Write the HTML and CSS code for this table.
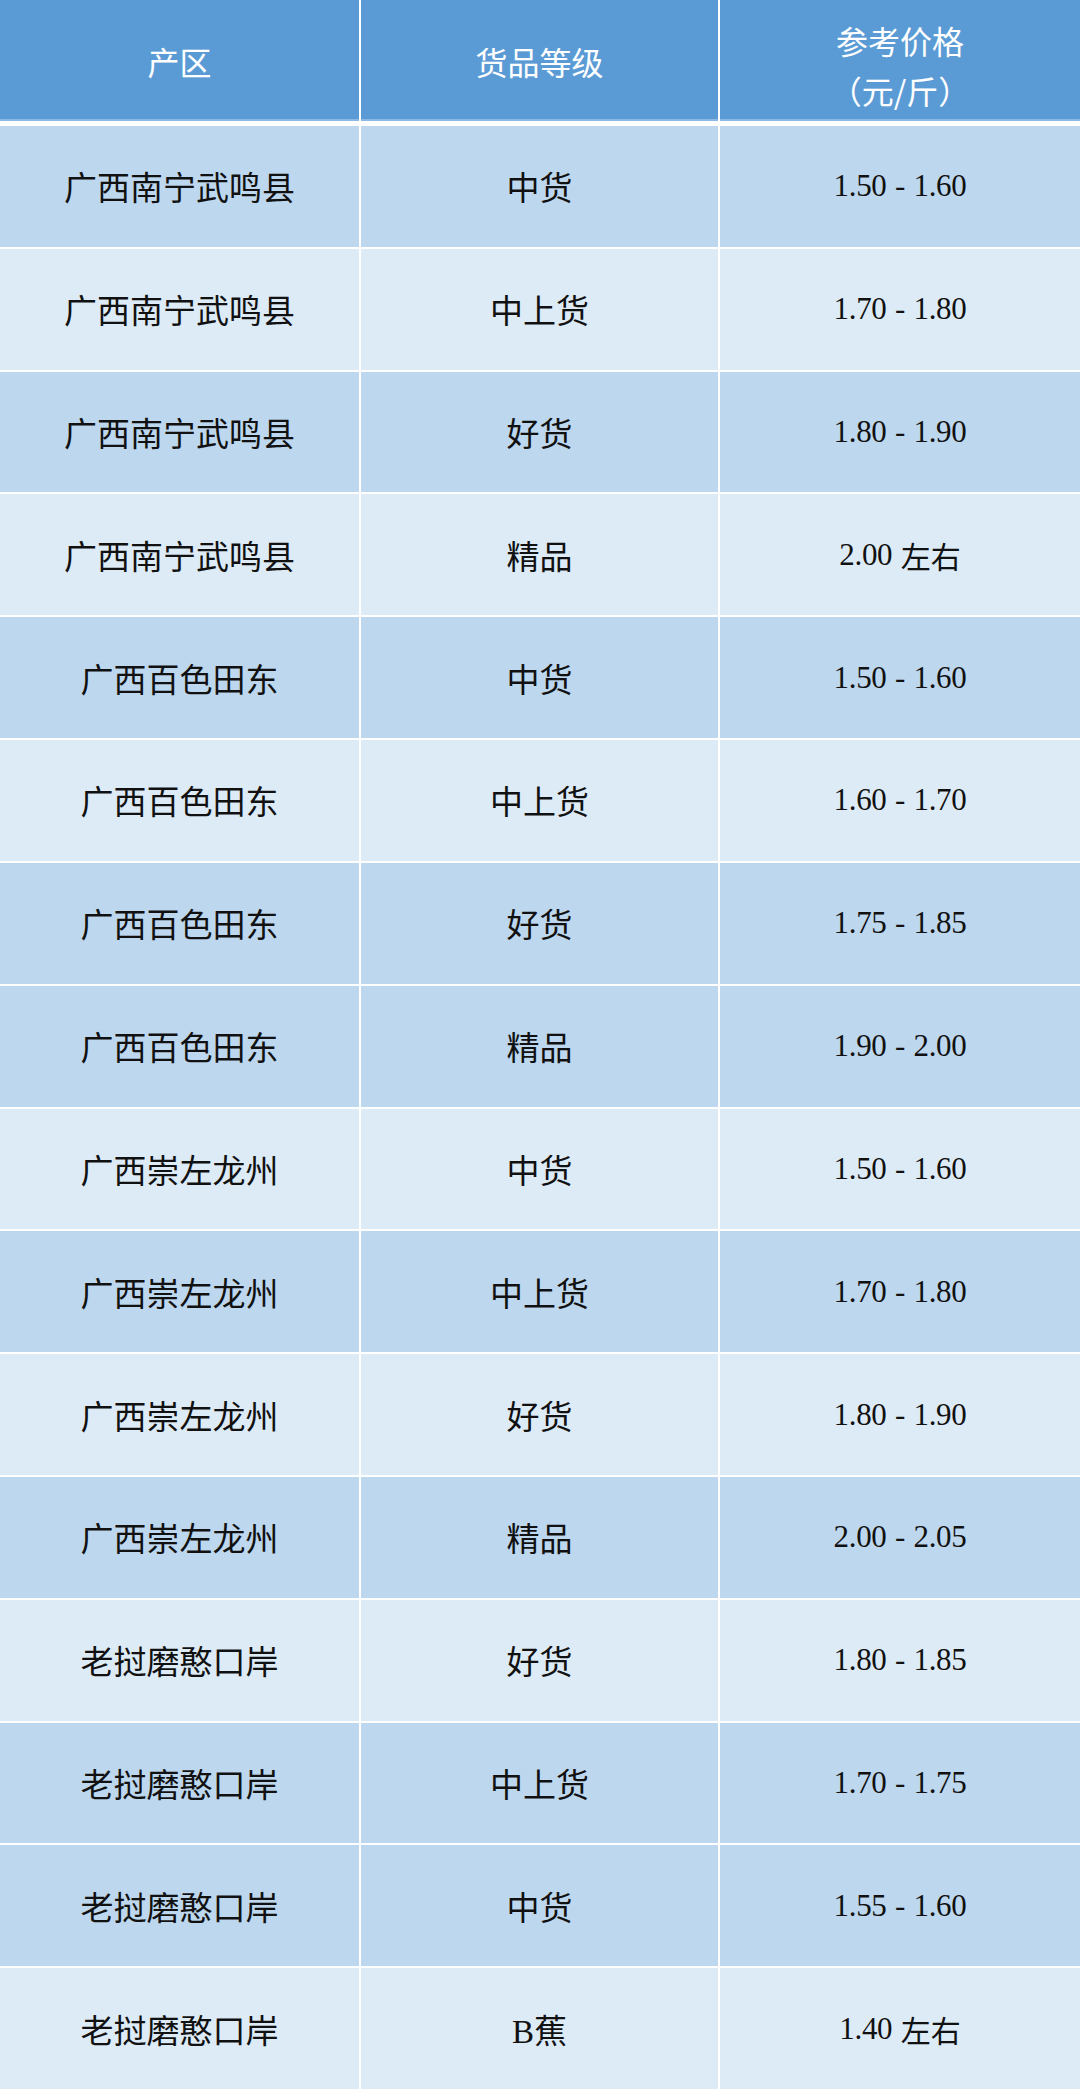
FILE: index.html
```html
<!DOCTYPE html>
<html lang="zh-CN">
<head>
<meta charset="utf-8">
<title>香蕉参考价格</title>
<link rel="stylesheet" href="styles.css">
</head>
<body>
<div class="table">
  <div class="head">
    <div class="hcell">产区</div>
    <div class="hcell">货品等级</div>
    <div class="hcell two">参考价格<br>（元/斤）</div>
  </div>
  <div class="rows">
    <div class="row dark"><div class="cell">广西南宁武鸣县</div><div class="cell">中货</div><div class="cell price">1.50 - 1.60</div></div>
    <div class="row light"><div class="cell">广西南宁武鸣县</div><div class="cell">中上货</div><div class="cell price">1.70 - 1.80</div></div>
    <div class="row dark"><div class="cell">广西南宁武鸣县</div><div class="cell">好货</div><div class="cell price">1.80 - 1.90</div></div>
    <div class="row light"><div class="cell">广西南宁武鸣县</div><div class="cell">精品</div><div class="cell price">2.00 <span class="cjk">左右</span></div></div>
    <div class="row dark"><div class="cell">广西百色田东</div><div class="cell">中货</div><div class="cell price">1.50 - 1.60</div></div>
    <div class="row light"><div class="cell">广西百色田东</div><div class="cell">中上货</div><div class="cell price">1.60 - 1.70</div></div>
    <div class="row dark"><div class="cell">广西百色田东</div><div class="cell">好货</div><div class="cell price">1.75 - 1.85</div></div>
    <div class="row dark"><div class="cell">广西百色田东</div><div class="cell">精品</div><div class="cell price">1.90 - 2.00</div></div>
    <div class="row light"><div class="cell">广西崇左龙州</div><div class="cell">中货</div><div class="cell price">1.50 - 1.60</div></div>
    <div class="row dark"><div class="cell">广西崇左龙州</div><div class="cell">中上货</div><div class="cell price">1.70 - 1.80</div></div>
    <div class="row light"><div class="cell">广西崇左龙州</div><div class="cell">好货</div><div class="cell price">1.80 - 1.90</div></div>
    <div class="row dark"><div class="cell">广西崇左龙州</div><div class="cell">精品</div><div class="cell price">2.00 - 2.05</div></div>
    <div class="row light"><div class="cell">老挝磨憨口岸</div><div class="cell">好货</div><div class="cell price">1.80 - 1.85</div></div>
    <div class="row dark"><div class="cell">老挝磨憨口岸</div><div class="cell">中上货</div><div class="cell price">1.70 - 1.75</div></div>
    <div class="row dark"><div class="cell">老挝磨憨口岸</div><div class="cell">中货</div><div class="cell price">1.55 - 1.60</div></div>
    <div class="row light"><div class="cell">老挝磨憨口岸</div><div class="cell">B蕉</div><div class="cell price">1.40 <span class="cjk">左右</span></div></div>
  </div>
</div>
</body>
</html>
```

FILE: styles.css
```css
html, body {
  margin: 0;
  padding: 0;
  background: #ffffff;
}

.table {
  width: 1080px;
  height: 2089px;
  display: flex;
  flex-direction: column;
  background: #ffffff;
}

.head {
  display: grid;
  grid-template-columns: 359px 357px 360px;
  column-gap: 2px;
  height: 121px;
  margin-bottom: 5px;
  flex: none;
}

.hcell {
  background: #5b9bd5;
  border-bottom: 2px solid #8cb8e2;
  box-sizing: border-box;
  color: #ffffff;
  font-family: "Noto Sans CJK SC", "Noto Sans", sans-serif;
  font-size: 32px;
  line-height: 50px;
  display: flex;
  align-items: center;
  justify-content: center;
  text-align: center;
  padding-top: 3px;
}

.hcell.two {
  padding-top: 10px;
}

.rows {
  flex: 1;
  display: flex;
  flex-direction: column;
  gap: 2px;
}

.row {
  flex: 1;
  display: grid;
  grid-template-columns: 359px 357px 360px;
  column-gap: 2px;
}

.row.dark .cell {
  background: #bdd7ee;
}

.row.light .cell {
  background: #ddebf7;
}

.cell {
  display: flex;
  align-items: center;
  justify-content: center;
  color: #111111;
  font-family: "Liberation Serif", "Noto Sans CJK SC", serif;
  font-size: 33px;
  padding-top: 0;
  box-sizing: border-box;
}

.cell.price {
  font-size: 31px;
  letter-spacing: -0.3px;
  word-spacing: 1px;
  white-space: pre;
}

.cjk {
  font-family: "Noto Sans CJK SC", sans-serif;
  font-size: 30px;
  letter-spacing: 0;
}
```
